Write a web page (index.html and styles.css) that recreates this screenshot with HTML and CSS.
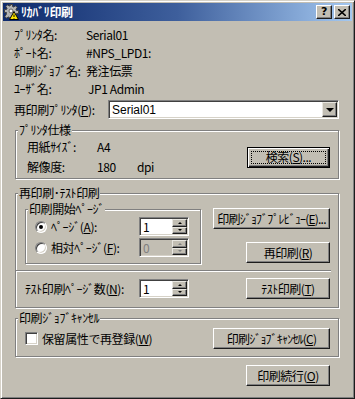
FILE: index.html
```html
<!DOCTYPE html>
<html lang="ja">
<head>
    <meta charset="UTF-8">
    <title>ﾘｶﾊﾞﾘ印刷</title>
    <link rel="stylesheet" href="styles.css">
</head>
<body>
    <div class="window">
        <div class="titlebar">
            <svg class="app-icon" width="16" height="16" viewBox="0 0 16 16">
                <path d="M5.5 .5h3v2l1.4.6 1.4-1.4 2 2-1.4 1.4.6 1.4h2v3h-2l-.6 1.4 1.4 1.4-2 2-1.4-1.4-1.4.6v2h-3v-2l-1.4-.6-1.4 1.4-2-2 1.4-1.4L2.5 8.5h-2v-3h2l.6-1.4-1.4-1.4 2-2 1.4 1.4 1.4-.6z" fill="#b4b4b4" stroke="#404040"/>
                <circle cx="7" cy="7" r="2" fill="#ffffff" stroke="#606060"/>
                <path d="M5.5 15.5L10 7.5l4.5 8z" fill="#ffe600" stroke="#000"/>
                <path d="M10 10.5v2.5M10 14v.6" stroke="#000"/>
            </svg>
            <span class="title">ﾘｶﾊﾞﾘ印刷</span>
            <div class="title-buttons">
                <span class="tbtn">?</span>
                <span class="tbtn">
                    <svg width="8" height="7" viewBox="0 0 8 7">
                        <path d="M0 0L8 7M8 0L0 7" stroke="#000" stroke-width="1.6"/>
                    </svg>
                </span>
            </div>
        </div>

        <div class="content">
            <div class="info">
                <div class="info-row"><span class="info-label">ﾌﾟﾘﾝﾀ名:</span><span>Serial01</span></div>
                <div class="info-row"><span class="info-label">ﾎﾟｰﾄ名:</span><span>#NPS_LPD1:</span></div>
                <div class="info-row"><span class="info-label">印刷ｼﾞｮﾌﾞ名:</span><span>発注伝票</span></div>
                <div class="info-row"><span class="info-label">ﾕｰｻﾞ名:</span><span class="user">JP1 Admin</span></div>
            </div>

            <div class="printer-row">
                <span class="printer-label">再印刷ﾌﾟﾘﾝﾀ(<u>P</u>):</span>
                <div class="combo">
                    <span class="combo-text">Serial01</span>
                    <span class="combo-btn"><span class="tri-down big"></span></span>
                </div>
            </div>

            <fieldset class="group">
                <legend>ﾌﾟﾘﾝﾀ仕様</legend>
                <div class="group-body spec">
                    <div class="spec-rows">
                        <div class="spec-row"><span class="spec-label">用紙ｻｲｽﾞ:</span><span class="spec-value">A4</span></div>
                        <div class="spec-row"><span class="spec-label">解像度:</span><span class="spec-value">180</span><span>dpi</span></div>
                    </div>
                    <button class="btn default">検索(<u>S</u>)...</button>
                </div>
            </fieldset>

            <fieldset class="group reprint">
                <legend>再印刷･ﾃｽﾄ印刷</legend>
                <div class="group-body">
                    <div class="top-row">
                        <fieldset class="group inner">
                            <legend>印刷開始ﾍﾟｰｼﾞ</legend>
                            <div class="group-body">
                                <div class="radio-row">
                                    <span class="radio checked"></span>
                                    <span>ﾍﾟｰｼﾞ(<u>A</u>):</span>
                                    <div class="spin">
                                        <span class="spin-text">1</span>
                                        <span class="spin-btns"><span class="spin-btn"><span class="tri-up"></span></span><span class="spin-btn"><span class="tri-down"></span></span></span>
                                    </div>
                                </div>
                                <div class="radio-row">
                                    <span class="radio"></span>
                                    <span>相対ﾍﾟｰｼﾞ(<u>F</u>):</span>
                                    <div class="spin disabled">
                                        <span class="spin-text">0</span>
                                        <span class="spin-btns"><span class="spin-btn"><span class="tri-up"></span></span><span class="spin-btn"><span class="tri-down"></span></span></span>
                                    </div>
                                </div>
                            </div>
                        </fieldset>
                        <div class="side-buttons">
                            <button class="btn wide">印刷ｼﾞｮﾌﾞﾌﾟﾚﾋﾞｭｰ(<u>E</u>)...</button>
                            <button class="btn">再印刷(<u>R</u>)</button>
                        </div>
                    </div>
                    <div class="separator"></div>
                    <div class="test-row">
                        <span class="test-label">ﾃｽﾄ印刷ﾍﾟｰｼﾞ数(<u>N</u>):</span>
                        <div class="spin">
                            <span class="spin-text">1</span>
                            <span class="spin-btns"><span class="spin-btn"><span class="tri-up"></span></span><span class="spin-btn"><span class="tri-down"></span></span></span>
                        </div>
                        <button class="btn push-right">ﾃｽﾄ印刷(<u>T</u>)</button>
                    </div>
                </div>
            </fieldset>

            <fieldset class="group cancel">
                <legend>印刷ｼﾞｮﾌﾞｷｬﾝｾﾙ</legend>
                <div class="group-body cancel-row">
                    <span class="checkbox"></span>
                    <span>保留属性で再登録(<u>W</u>)</span>
                    <button class="btn wide push-right">印刷ｼﾞｮﾌﾞｷｬﾝｾﾙ(<u>C</u>)</button>
                </div>
            </fieldset>

            <div class="bottom-row">
                <button class="btn">印刷続行(<u>O</u>)</button>
            </div>
        </div>
    </div>
</body>
</html>
```

FILE: styles.css
```css
* {
    box-sizing: border-box;
}
body {
    margin: 0;
    font: 12px/14px "Noto Sans CJK JP", sans-serif;
    letter-spacing: -0.4px;
    white-space: nowrap;
    color: #000;
    background: #c2beb3;
}
.window {
    width: 355px;
    height: 399px;
    background: #c2beb3;
    border: 1px solid;
    border-color: #d6d2c8 #1c1c1c #1c1c1c #d6d2c8;
    box-shadow: inset 1px 1px #fff, inset -1px -1px #808080;
    padding: 2px;
}
.titlebar {
    height: 18px;
    display: flex;
    align-items: center;
    background: linear-gradient(to right, #0e2a6c, #3e5f9c 50%, #a4c8f0);
}
.app-icon {
    margin-left: 1px;
    margin-right: 1px;
}
.title {
    color: #fff;
    font-weight: bold;
}
.title-buttons {
    margin-left: auto;
    margin-right: 2px;
    display: flex;
    gap: 2px;
}
.tbtn {
    width: 16px;
    height: 14px;
    display: flex;
    align-items: center;
    justify-content: center;
    background: #c2beb3;
    border: 1px solid;
    border-color: #fff #1c1c1c #1c1c1c #fff;
    box-shadow: inset -1px -1px #808080;
    font: bold 11px/12px "DejaVu Sans", sans-serif;
}
.content {
    padding: 5px 13px 0 11px;
}
.info-row {
    height: 18px;
    display: flex;
    align-items: center;
}
.info-label {
    width: 72px;
}
.user {
    margin-left: 2px;
}
.printer-row {
    margin-top: 2px;
    height: 19px;
    display: flex;
    align-items: center;
}
.printer-label {
    width: 94px;
}
.combo {
    flex: 1;
    height: 19px;
    display: flex;
    align-items: center;
    background: #fff;
    border: 1px solid;
    border-color: #808080 #fff #fff #808080;
    box-shadow: inset 1px 1px #404040, inset -1px -1px #d6d2c8;
    padding: 1px;
}
.combo-text {
    flex: 1;
    padding-left: 2px;
    font: 12px "Liberation Sans", sans-serif;
    letter-spacing: 0;
}
.combo-btn {
    width: 15px;
    height: 15px;
    display: flex;
    align-items: center;
    justify-content: center;
    background: #c2beb3;
    border: 1px solid;
    border-color: #e8e6e0 #1c1c1c #1c1c1c #e8e6e0;
    box-shadow: inset -1px -1px #808080;
}
.tri-down, .tri-up {
    width: 0;
    height: 0;
    border: 3px solid transparent;
}
.tri-down {
    border-bottom-width: 0;
    border-top-color: #000;
}
.tri-up {
    border-top-width: 0;
    border-bottom-color: #000;
}
.tri-down.big {
    border-width: 4px 4px 0;
}
.group {
    margin: 4px 0 0 1px;
    padding: 0;
    min-width: 0;
    border: 1px solid #808080;
    box-shadow: inset 1px 1px #fff, 1px 1px #fff;
}
.group legend {
    margin-left: 2px;
    padding: 0 1px;
    line-height: 14px;
    background: #c2beb3;
}
.spec {
    display: flex;
    align-items: center;
    justify-content: space-between;
    padding: 0 8px 1px 11px;
}
.spec-row {
    height: 20px;
    display: flex;
    align-items: center;
}
.spec-label {
    width: 70px;
}
.spec-value {
    width: 40px;
}
.btn {
    position: relative;
    width: 84px;
    height: 21px;
    padding: 0;
    font: 12px/14px "Noto Sans CJK JP", sans-serif;
    letter-spacing: -0.5px;
    white-space: nowrap;
    color: #000;
    background: #c2beb3;
    border: 1px solid;
    border-color: #fff #1c1c1c #1c1c1c #fff;
    box-shadow: inset -1px -1px #808080;
}
.btn.wide {
    width: 117px;
    letter-spacing: -0.8px;
}
.btn.default {
    width: 83px;
    border-color: #000;
    box-shadow: inset 1px 1px #fff, inset -1px -1px #1c1c1c, inset -2px -2px #808080;
}
.btn.default::after {
    content: "";
    position: absolute;
    inset: 3px;
    border: 1px dotted #000;
}
.reprint {
    margin-top: 7px;
}
.reprint > .group-body {
    padding: 0 8px 8px 9px;
}
.top-row {
    display: flex;
    align-items: flex-start;
    justify-content: space-between;
}
.group.inner {
    margin: 2px 0 0 0;
    width: 176px;
}
.inner .group-body {
    padding: 1px 11px 6px 9px;
    display: flex;
    flex-direction: column;
    gap: 2px;
}
.radio-row {
    height: 19px;
    display: flex;
    align-items: center;
}
.radio {
    position: relative;
    width: 12px;
    height: 12px;
    margin-right: 4px;
    border-radius: 50%;
    background: #fff;
    border: 1px solid;
    border-color: #808080 #fff #fff #808080;
    box-shadow: inset 1px 1px #404040, inset -1px -1px #d6d2c8;
}
.radio.checked::after {
    content: "";
    position: absolute;
    left: 3px;
    top: 3px;
    width: 4px;
    height: 4px;
    border-radius: 50%;
    background: #000;
}
.spin {
    margin-left: auto;
    width: 50px;
    height: 19px;
    display: flex;
    background: #fff;
    border: 1px solid;
    border-color: #808080 #fff #fff #808080;
    box-shadow: inset 1px 1px #404040, inset -1px -1px #d6d2c8;
    padding: 1px;
}
.spin-text {
    flex: 1;
    padding-left: 2px;
    line-height: 15px;
}
.spin-btns {
    width: 15px;
    display: flex;
    flex-direction: column;
}
.spin-btn {
    flex: 1;
    display: flex;
    align-items: center;
    justify-content: center;
    background: #c2beb3;
    border: 1px solid;
    border-color: #e8e6e0 #1c1c1c #1c1c1c #e8e6e0;
    box-shadow: inset -1px -1px #808080;
}
.spin-btn .tri-up, .spin-btn .tri-down {
    border-width: 2px;
}
.spin-btn .tri-up {
    border-top-width: 0;
}
.spin-btn .tri-down {
    border-bottom-width: 0;
}
.spin.disabled {
    background: #c2beb3;
}
.spin.disabled .spin-text {
    color: #808080;
}
.spin.disabled .tri-up {
    border-bottom-color: #808080;
}
.spin.disabled .tri-down {
    border-top-color: #808080;
}
.side-buttons {
    padding-top: 8px;
    display: flex;
    flex-direction: column;
    align-items: flex-end;
    gap: 13px;
}
.separator {
    margin: 6px 0 0 -9px;
    width: 315px;
    height: 2px;
    border-top: 1px solid #808080;
    border-bottom: 1px solid #fff;
}
.test-row {
    margin-top: 6px;
    height: 21px;
    display: flex;
    align-items: center;
}
.test-label {
    width: 114px;
}
.test-row .spin {
    margin-left: 0;
}
.push-right {
    margin-left: auto;
}
.cancel {
    margin-top: 3px;
}
.cancel-row {
    display: flex;
    align-items: center;
    padding: 3px 8px 7px 9px;
}
.checkbox {
    width: 13px;
    height: 13px;
    margin-right: 4px;
    background: #fff;
    border: 1px solid;
    border-color: #808080 #fff #fff #808080;
    box-shadow: inset 1px 1px #404040, inset -1px -1px #d6d2c8;
}
.bottom-row {
    margin-top: 8px;
    padding-right: 9px;
    display: flex;
    justify-content: flex-end;
}
```
